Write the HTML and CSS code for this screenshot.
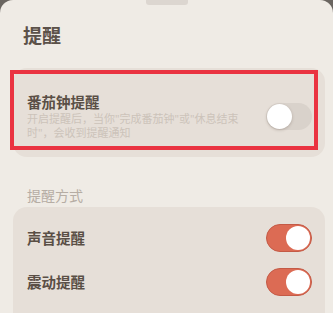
FILE: index.html
```html
<!DOCTYPE html>
<html lang="zh-CN">

<head>
  <meta charset="UTF-8">
  <meta name="viewport" content="width=device-width, initial-scale=1.0">
  <title>提醒</title>
  <link rel="stylesheet" href="styles.css">
</head>

<body>

  <div class="sheet">
    <div class="handle"></div>
    <h1 class="title">提醒</h1>

    <div class="card card-main">
      <div class="row row-tall">
        <div class="row-text">
          <div class="row-label">番茄钟提醒</div>
          <div class="row-desc">开启提醒后，当你"完成番茄钟"或"休息结束<br>时"，会收到提醒通知</div>
        </div>
        <span class="toggle"></span>
      </div>
      <div class="highlight"></div>
    </div>

    <div class="section-label">提醒方式</div>

    <div class="card card-list">
      <div class="row">
        <div class="row-label">声音提醒</div>
        <span class="toggle on"></span>
      </div>
      <div class="row">
        <div class="row-label">震动提醒</div>
        <span class="toggle on"></span>
      </div>
    </div>
  </div>

</body>

</html>
```

FILE: styles.css
```css
body {
  margin: 0;
  background-color: #6a6560;
  font-family: "Noto Sans CJK SC", "Noto Sans", sans-serif;
}

.sheet {
  height: 313px;
  overflow: hidden;
  background-color: #efebe5;
  border-radius: 13px 13px 0 0;
}

.handle {
  width: 42px;
  height: 5px;
  margin: 0 auto;
  background-color: #dcd6d0;
  border-radius: 0 0 3px 3px;
}

.title {
  margin: 17px 0 0 23px;
  font-size: 19px;
  line-height: 26px;
  font-weight: 700;
  color: #5b5149;
}

.card {
  position: relative;
  margin-left: 13px;
  width: 312px;
  background-color: #e6dfd8;
  border-radius: 14px;
}

.card-main {
  margin-top: 20px;
  padding: 24px 0 17px;
}

.highlight {
  position: absolute;
  left: -3px;
  top: 2px;
  right: 7px;
  bottom: 7px;
  border: 4px solid #ea3341;
}

.row {
  display: flex;
  align-items: center;
  justify-content: space-between;
  height: 44px;
  padding: 0 13px 0 14px;
}

.row-tall {
  height: auto;
}

.row-label {
  font-size: 14.5px;
  line-height: 20px;
  font-weight: 700;
  color: #5a4f46;
}

/* latin quotes from Noto Sans so they stay narrow */
.row-desc {
  white-space: nowrap;
  font-family: "Noto Sans", "Noto Sans CJK SC", sans-serif;
  font-size: 11px;
  line-height: 14px;
  color: #ccc3ba;
}

.section-label {
  margin: 28px 0 2px 27px;
  font-size: 14px;
  line-height: 20px;
  color: #b6ada4;
}

.card-list {
  padding-top: 9px;
  height: 120px;
}

.toggle {
  position: relative;
  flex-shrink: 0;
  width: 46px;
  height: 27px;
  border-radius: 14px;
  background-color: #d9d2cb;
}

.toggle::after {
  content: "";
  position: absolute;
  top: 1px;
  left: 1px;
  width: 25px;
  height: 25px;
  border-radius: 50%;
  background-color: #ffffff;
  box-shadow: 0 1px 3px rgba(90, 70, 60, 0.3);
}

.toggle.on {
  height: 28px;
  box-sizing: border-box;
  border: 1px solid #c45a46;
  background-color: #dc6b54;
}

.toggle.on::after {
  top: 1px;
  left: auto;
  right: 1px;
  width: 24px;
  height: 24px;
  box-shadow: none;
}
```
